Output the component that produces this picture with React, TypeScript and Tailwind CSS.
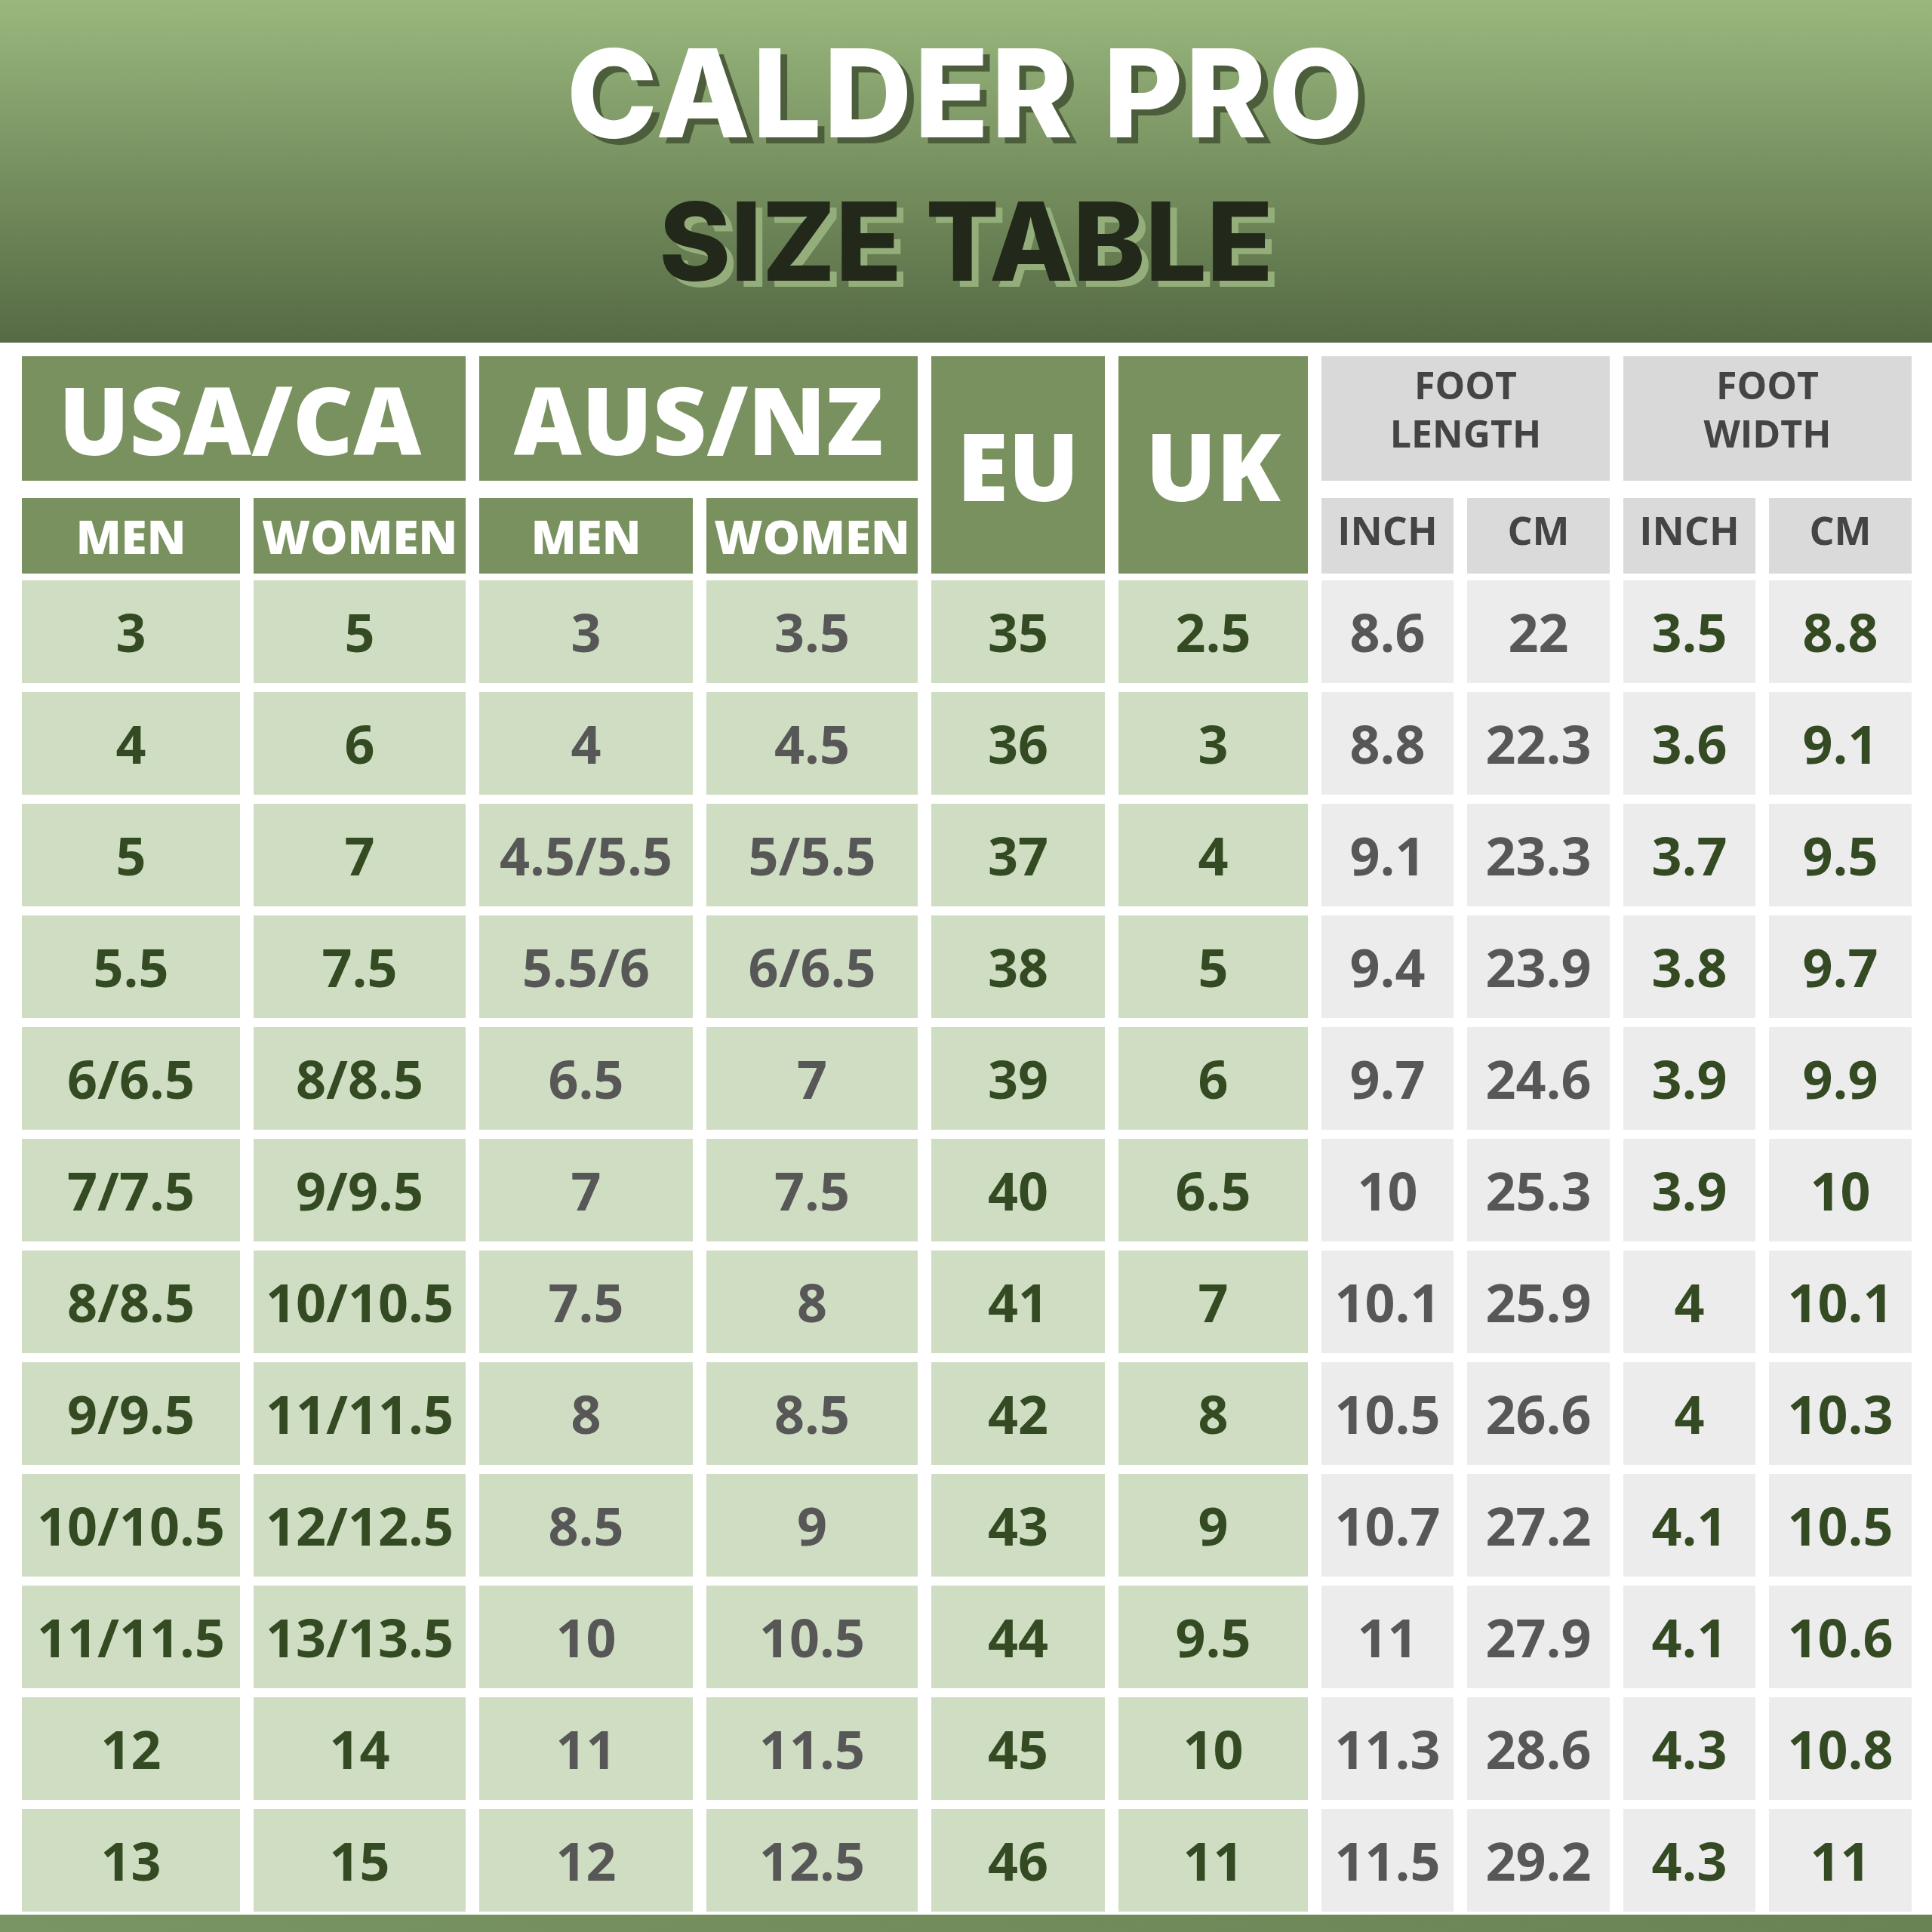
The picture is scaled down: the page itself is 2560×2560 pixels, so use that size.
import React from "react";

const rows: string[][] = [
  ["3", "5", "3", "3.5", "35", "2.5", "8.6", "22", "3.5", "8.8"],
  ["4", "6", "4", "4.5", "36", "3", "8.8", "22.3", "3.6", "9.1"],
  ["5", "7", "4.5/5.5", "5/5.5", "37", "4", "9.1", "23.3", "3.7", "9.5"],
  ["5.5", "7.5", "5.5/6", "6/6.5", "38", "5", "9.4", "23.9", "3.8", "9.7"],
  ["6/6.5", "8/8.5", "6.5", "7", "39", "6", "9.7", "24.6", "3.9", "9.9"],
  ["7/7.5", "9/9.5", "7", "7.5", "40", "6.5", "10", "25.3", "3.9", "10"],
  ["8/8.5", "10/10.5", "7.5", "8", "41", "7", "10.1", "25.9", "4", "10.1"],
  ["9/9.5", "11/11.5", "8", "8.5", "42", "8", "10.5", "26.6", "4", "10.3"],
  ["10/10.5", "12/12.5", "8.5", "9", "43", "9", "10.7", "27.2", "4.1", "10.5"],
  ["11/11.5", "13/13.5", "10", "10.5", "44", "9.5", "11", "27.9", "4.1", "10.6"],
  ["12", "14", "11", "11.5", "45", "10", "11.3", "28.6", "4.3", "10.8"],
  ["13", "15", "12", "12.5", "46", "11", "11.5", "29.2", "4.3", "11"],
];

// per column: background class and text colour class
const colStyle: { bg: string; fg: string }[] = [
  { bg: "bg-[#cfdec2]", fg: "text-[#344a22]" },
  { bg: "bg-[#cfdec2]", fg: "text-[#344a22]" },
  { bg: "bg-[#cfdec2]", fg: "text-[#575757]" },
  { bg: "bg-[#cfdec2]", fg: "text-[#575757]" },
  { bg: "bg-[#cfdec2]", fg: "text-[#344a22]" },
  { bg: "bg-[#cfdec2]", fg: "text-[#344a22]" },
  { bg: "bg-[#ececec]", fg: "text-[#575757]" },
  { bg: "bg-[#ececec]", fg: "text-[#575757]" },
  { bg: "bg-[#ececec]", fg: "text-[#344a22]" },
  { bg: "bg-[#ececec]", fg: "text-[#344a22]" },
];

const cols = "grid-cols-[289px_281px_283px_280px_230px_251px_175px_189px_175px_189px]";

export default function App() {
  return (
    <div className="w-[2560px] h-[2560px] bg-white flex flex-col font-['Open_Sans',sans-serif]">
      {/* Title header */}
      <div className="h-[454px] bg-gradient-to-b from-[#9ab87e] to-[#566a44] flex flex-col items-center">
        <div className="mt-[42px] text-[162px] leading-none font-extrabold text-white font-['Inter',sans-serif] tracking-[3px] [text-shadow:9px_8px_0_#4b5d3a]">
          CALDER PRO
        </div>
        <div className="mt-[44px] text-[144px] leading-none font-extrabold text-[#22281a] font-['Inter',sans-serif] [text-shadow:9px_8px_0_#94ae7b]">
          SIZE TABLE
        </div>
      </div>

      {/* Table */}
      <div className="pt-[18px] pl-[29px]">
        {/* Header grid */}
        <div className={`grid ${cols} grid-rows-[165px_100px] gap-x-[18px] gap-y-[23px]`}>
          <div className="col-span-2 bg-[#79915e] flex items-center justify-center pr-[10px] text-white font-extrabold text-[124px] leading-none">
            USA/CA
          </div>
          <div className="col-span-2 bg-[#79915e] flex items-center justify-center text-white font-extrabold text-[124px] leading-none">
            AUS/NZ
          </div>
          <div className="row-span-2 bg-[#79915e] flex items-center justify-center text-white font-extrabold text-[124px] leading-none">
            EU
          </div>
          <div className="row-span-2 bg-[#79915e] flex items-center justify-center text-white font-extrabold text-[124px] leading-none">
            UK
          </div>
          <div className="col-span-2 bg-[#d9d9d9] flex flex-col items-center justify-center pb-[26px] text-[#444444] font-bold text-[50px] leading-[64px] text-center">
            <span>FOOT</span>
            <span>LENGTH</span>
          </div>
          <div className="col-span-2 bg-[#d9d9d9] flex flex-col items-center justify-center pb-[26px] text-[#444444] font-bold text-[50px] leading-[64px] text-center">
            <span>FOOT</span>
            <span>WIDTH</span>
          </div>

          <div className="bg-[#79915e] flex items-center justify-center text-white font-extrabold text-[62px] leading-none">
            MEN
          </div>
          <div className="bg-[#79915e] flex items-center justify-center text-white font-extrabold text-[62px] leading-none">
            WOMEN
          </div>
          <div className="bg-[#79915e] flex items-center justify-center text-white font-extrabold text-[62px] leading-none">
            MEN
          </div>
          <div className="bg-[#79915e] flex items-center justify-center text-white font-extrabold text-[62px] leading-none">
            WOMEN
          </div>
          <div className="bg-[#dadada] flex items-center justify-center pb-[16px] text-[#444444] font-bold text-[52px] leading-none">
            INCH
          </div>
          <div className="bg-[#dadada] flex items-center justify-center pb-[16px] text-[#444444] font-bold text-[52px] leading-none">
            CM
          </div>
          <div className="bg-[#dadada] flex items-center justify-center pb-[16px] text-[#444444] font-bold text-[52px] leading-none">
            INCH
          </div>
          <div className="bg-[#dadada] flex items-center justify-center pb-[16px] text-[#444444] font-bold text-[52px] leading-none">
            CM
          </div>
        </div>

        {/* Data grid */}
        <div className={`mt-[9px] grid ${cols} auto-rows-[136px] gap-x-[18px] gap-y-[12px]`}>
          {rows.map((r, i) =>
            r.map((v, j) => (
              <div
                key={`${i}-${j}`}
                className={`${colStyle[j].bg} ${colStyle[j].fg} flex items-center justify-center font-bold text-[70px] leading-none`}
              >
                {v}
              </div>
            ))
          )}
        </div>
      </div>

      {/* bottom band */}
      <div className="mt-auto h-[23px] bg-gradient-to-r from-[#7a9564] to-[#6a8354]" />
    </div>
  );
}
